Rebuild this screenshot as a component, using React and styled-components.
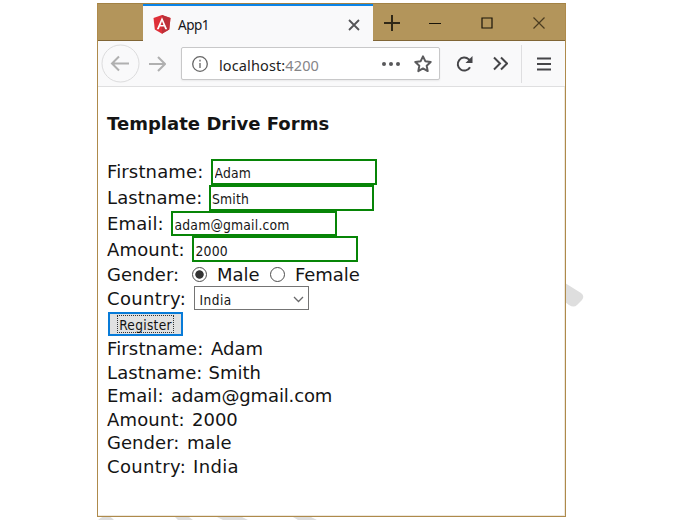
import React from "react";
import styled, { createGlobalStyle } from "styled-components";

const GlobalStyle = createGlobalStyle`
  * { box-sizing: border-box; }
  body { margin: 0; background: #fff; overflow: hidden; }
`;

const Page = styled.main`
  position: relative;
  width: 682px;
  height: 520px;
  padding: 3px 0 0 97px;
  overflow: hidden;
`;
const Watermark = styled.svg`
  position: absolute;
  inset: 0;
  fill: #dedede;
`;
const BrowserWindow = styled.section`
  position: relative;
  width: 469px;
  height: 514px;
  border: 1px solid #ae8a4b;
  border-top-color: #a38244;
  background: #fff;
  box-shadow: inset -1px -1px #eee8dd;
  display: flex;
  flex-direction: column;
`;
const TitleBar = styled.header`
  height: 37px;
  flex: none;
  display: flex;
  background: #b3955b;
  padding-left: 45px;
  box-shadow: inset 0 -1px #806535;
`;
const Tab = styled.div`
  width: 230px;
  height: 37px;
  display: flex;
  align-items: center;
  padding: 2px 13px 0 10px;
  background: #f9f9fa;
  border-top: 2px solid #0a84e8;
  color: #15151a;
`;
const TabTitle = styled.span`
  margin-left: 7px;
  flex: 1;
  font: 13.5px "Noto Sans", sans-serif;
  letter-spacing: -0.5px;
`;
const WindowControls = styled.div`
  display: flex;
  flex: 1;
  align-items: center;
  padding-left: 10px;
`;
const Control = styled.svg`
  flex: none;
  width: ${(p) => p.$size || 18}px;
  height: ${(p) => p.$size || 18}px;
  margin-left: ${(p) => p.$gap || 0}px;
  fill: none;
  stroke: ${(p) => p.$color || "#454548"};
  stroke-width: ${(p) => p.$stroke || 2};
`;
const Toolbar = styled.nav`
  height: 46px;
  flex: none;
  display: flex;
  align-items: center;
  background: #f9f9fa;
  border-bottom: 1px solid #dfdfe0;
  padding: 0 0 0 3px;
`;
const AddressBar = styled.div`
  width: 259px;
  height: 33px;
  margin-left: 15px;
  display: flex;
  align-items: center;
  background: #fff;
  border: 1px solid #c8c8c9;
  border-radius: 2px;
  box-shadow: 0 1px 2px #0001;
  padding-left: 10px;
`;
const Address = styled.span`
  width: 150px;
  margin-left: 11px;
  padding-top: 2px;
  font: 14.5px "Noto Sans", sans-serif;
  letter-spacing: 0.12px;
  color: #1d1d22;
`;
const Port = styled.span`
  color: #858587;
`;
const Divider = styled.i`
  width: 1px;
  height: 38px;
  margin-left: 13px;
  background: #dedee0;
`;
const Content = styled.article`
  padding: 24px 0 0 9px;
  color: #141414;
  font-family: "DejaVu Sans", Verdana, sans-serif;
  font-size: 18px;
`;
const Title = styled.h1`
  height: 25px;
  margin: 0 0 23px;
  font-size: 18px;
  line-height: 25px;
  letter-spacing: 0.03px;
`;
const FormRow = styled.div`
  display: flex;
  align-items: center;
  height: ${(p) => p.$height || 25.75}px;
`;
const Label = styled.label`
  flex: none;
  width: ${(p) => p.$width}px;
  letter-spacing: ${(p) => p.$tracking || 0}px;
  white-space: nowrap;
`;
const TextInput = styled.input`
  width: 165.5px;
  height: 25.75px;
  padding: 3px 1px 0 1.5px;
  border: 2px solid #078507;
  border-radius: 0;
  outline: 0;
  background: #fff;
  color: #171717;
  font: 13.8px "DejaVu Sans Condensed", "DejaVu Sans", sans-serif;
  font-stretch: condensed;
  letter-spacing: 0.18px;
`;
const Radio = styled.span`
  width: 15px;
  height: 15px;
  border: 1px solid #4c4c4c;
  border-radius: 50%;
  background: ${(p) => (p.$checked ? "radial-gradient(circle, #333 0 3.8px, #fff 4.6px)" : "#fff")};
`;
const RadioLabel = styled.span`
  width: ${(p) => p.$width}px;
  margin-left: 10px;
  letter-spacing: -0.05px;
`;
const Select = styled.div`
  width: 115px;
  height: 24px;
  display: flex;
  align-items: center;
  justify-content: space-between;
  padding: 3px 4px 0 4.5px;
  border: 1px solid #747474;
  background: #fff;
  font: 13.5px "DejaVu Sans Condensed", "DejaVu Sans", sans-serif;
  font-stretch: condensed;
  letter-spacing: 0.5px;
`;
const RegisterButton = styled.button`
  display: flex;
  align-items: center;
  justify-content: center;
  width: 75px;
  height: 24px;
  margin: 1.5px 0 1px 1px;
  padding: 0;
  border: 2px solid #087bd8;
  background: #e1e1e1;
  color: #111;
`;
const FocusText = styled.span`
  width: 57px;
  height: 18px;
  border: 1px dotted #333;
  font: 13.6px/18px "DejaVu Sans Condensed", "DejaVu Sans", sans-serif;
  font-stretch: condensed;
  letter-spacing: 0.3px;
`;
const ResultRow = styled.div`
  height: 23.55px;
  line-height: 23.55px;
  white-space: nowrap;
  display: flex;
`;
const ResultValue = styled.span`
  letter-spacing: ${(p) => p.$tracking || 0}px;
`;

const fields = [
  { label: "Firstname:", value: "Adam", width: 104, tracking: 0.14 },
  { label: "Lastname:", value: "Smith", width: 101.5, tracking: 0.1 },
  { label: "Email:", value: "adam@gmail.com", width: 64, tracking: 0.12, valueTracking: -0.14 },
  { label: "Amount:", value: "2000", width: 85, tracking: 0.14 },
];
const results = [
  ...fields,
  { label: "Gender:", value: "male", width: 80, tracking: 0.05 },
  { label: "Country:", value: "India", width: 86, tracking: 0.35, valueTracking: 0.35 },
];

function AngularLogo() {
  return (
    <svg width="18" height="19" viewBox="0 0 18 19">
      <path d="M9 0 17.5 3 16.2 14.5 9 18.8 1.8 14.5.5 3Z" fill="#df2f38" />
      <path d="m9 0 8.5 3-1.3 11.5L9 18.8Z" fill="#bd3039" />
      <path d="m9 2.3-5.2 12h2l1.1-2.7h4.2l1.1 2.7h2L9 2.3Zm0 4 1.4 3.6H7.6Z" fill="#fff" />
    </svg>
  );
}

export default function App() {
  return (
    <Page>
      <GlobalStyle />
      <Watermark viewBox="0 0 682 520">
        <path d="M565 283l16 10q4 3 1 7l-5 5q-3 3-8 0l-4-3ZM98 520q9-8 16 0ZM175 517h14l4 3h-15ZM217 517h25l6 3h-25ZM293 517h18l6 3h-19Z" />
      </Watermark>
      <BrowserWindow>
        <TitleBar>
          <Tab>
            <AngularLogo />
            <TabTitle>App1</TabTitle>
            <Control $size={12} $color="#555558" $stroke={1.8} viewBox="0 0 12 12"><path d="m1 1 10 10M11 1 1 11" /></Control>
          </Tab>
          <WindowControls>
            <Control $color="#302817" viewBox="0 0 18 18"><path d="M1 9h16M9 1v16" /></Control>
            <Control $size={12} $gap={28} $color="#191409" $stroke={1} viewBox="0 0 12 12"><path d="M0 6.5h12" /></Control>
            <Control $size={12} $gap={40} $color="#191409" $stroke={1.2} viewBox="0 0 12 12"><path d="M1 1h10v10H1Z" /></Control>
            <Control $size={12} $gap={40} $color="#4b3c20" $stroke={1.2} viewBox="0 0 12 12"><path d="m.5.5 11 11M11.5.5.5 11.5" /></Control>
          </WindowControls>
        </TitleBar>
        <Toolbar>
          <Control $size={39} $color="#b0b0b0" viewBox="0 0 39 39"><circle cx="19.5" cy="19.5" r="18.5" stroke="#dcdcdd" strokeWidth="1" /><path d="M28 19.5H11m7-7-7 7 7 7" /></Control>
          <Control $gap={8} $color="#b0b0b0" viewBox="0 0 18 18"><path d="M1 9h16m-7-7 7 7-7 7" /></Control>
          <AddressBar>
            <Control $size={16} $color="#666" $stroke={1.3} viewBox="0 0 16 16"><circle cx="8" cy="8" r="7.3" /><path d="M8 7v5M8 3.8v1.6" /></Control>
            <Address>localhost:<Port>4200</Port></Address>
            <Control $gap={13} viewBox="0 0 18 18"><g fill="#58585a" stroke="none"><circle cx="2" cy="9" r="2" /><circle cx="9" cy="9" r="2" /><circle cx="16" cy="9" r="2" /></g></Control>
            <Control $gap={14} $color="#5b5b5d" viewBox="0 0 18 18"><path strokeLinejoin="round" d="m9 1.3 2.3 4.9 5.4.7-4 3.8 1 5.4L9 13.4l-4.7 2.7 1-5.4-4-3.8 5.4-.7Z" /></Control>
          </AddressBar>
          <Control $gap={15} viewBox="0 0 18 18"><path d="M15 12.2A6.5 6.5 0 1 1 13.8 4.4L16 6" /><path fill="#454548" stroke="none" d="M17.5 1v7h-7Z" /></Control>
          <Control $size={15} $gap={20} viewBox="0 0 15 15"><path d="m1 1.5 6 6-6 6M8 1.5l6 6-6 6" /></Control>
          <Divider />
          <Control $size={14} $gap={15} viewBox="0 0 14 14"><path d="M0 1.5h14M0 7h14M0 12.5h14" /></Control>
        </Toolbar>
        <Content>
          <Title>Template Drive Forms</Title>
          {fields.map(({ label, value, width, tracking }) => (
            <FormRow key={label}>
              <Label $width={width} $tracking={tracking}>{label}</Label>
              <TextInput aria-label={label} defaultValue={value} />
            </FormRow>
          ))}
          <FormRow $height={24}>
            <Label $width={85}>Gender:</Label>
            <Radio $checked /><RadioLabel $width={53}>Male</RadioLabel>
            <Radio /><RadioLabel>Female</RadioLabel>
          </FormRow>
          <FormRow $height={24.5}>
            <Label $width={87} $tracking={0.35}>Country:</Label>
            <Select>India<Control $size={11} $stroke={1.3} $color="#69696b" viewBox="0 0 11 11"><path d="m1 3 4.5 4.5L10 3" /></Control></Select>
          </FormRow>
          <RegisterButton><FocusText>Register</FocusText></RegisterButton>
          {results.map(({ label, value, width, tracking, valueTracking }) => (
            <ResultRow key={label}>
              <Label $width={width} $tracking={tracking}>{label}</Label>
              <ResultValue $tracking={valueTracking}>{value}</ResultValue>
            </ResultRow>
          ))}
        </Content>
      </BrowserWindow>
    </Page>
  );
}
